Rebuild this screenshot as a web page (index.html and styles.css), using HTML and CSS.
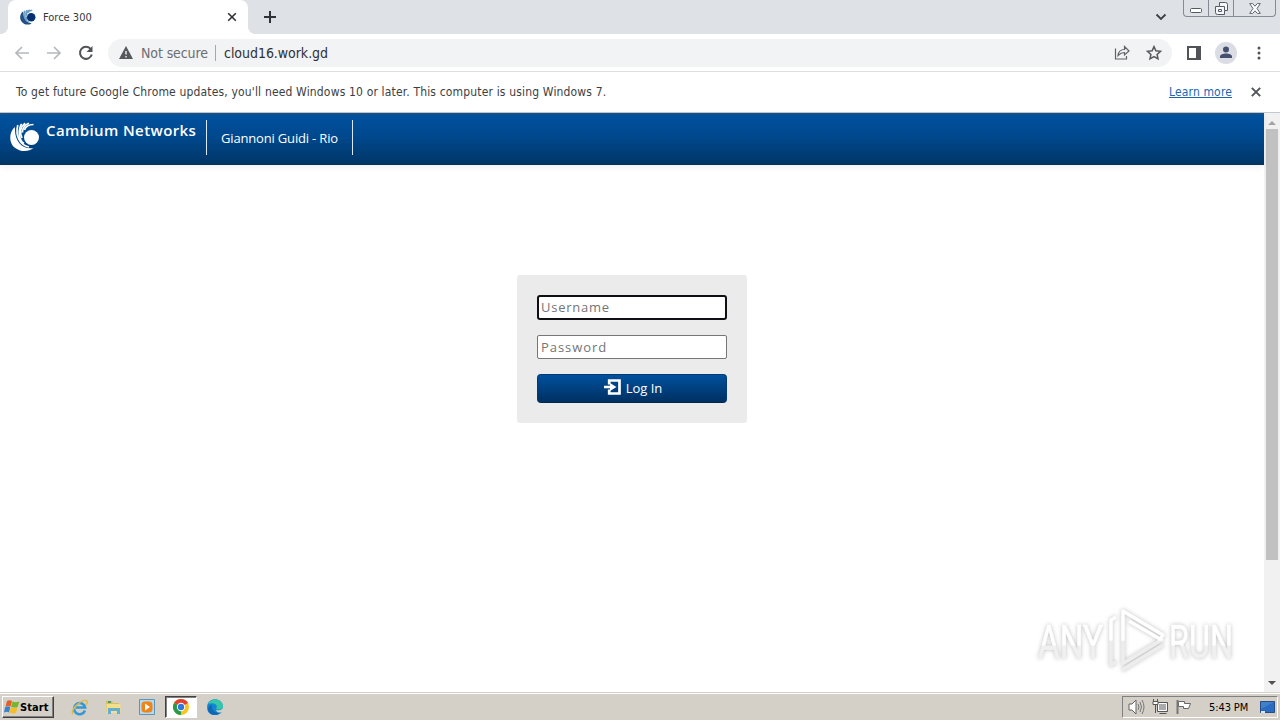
FILE: index.html
```html
<!DOCTYPE html>
<html lang="en">
<head>
<meta charset="utf-8">
<title>Force 300</title>
<link rel="stylesheet" href="styles.css">
</head>
<body>
<header class="tabs">
  <div class="tab">
    <svg class="favicon" width="16" height="16" viewBox="0 0 30 30"><path d="M6 4C-2 10-2 23 8 28q7 3 14-1Q6 25 6 4z" fill="#215184"/><path d="M9 3Q4 18 17 25M13 2Q8 12 14 20M18 1.500Q11 5 12 13M23 2Q16 3 14 8" fill="none" stroke="#6c9bc2" stroke-width="2.400"/><circle cx="21" cy="15.500" r="8" fill="#062f70"/></svg>
    <span class="tab-title">Force 300</span>
    <svg class="tab-close" width="10" height="10" viewBox="0 0 10 10"><path d="M1.200 1.200l7.600 7.600M8.800 1.200L1.200 8.800" stroke="#303236" stroke-width="1.600"/></svg>
  </div>
  <svg class="new-tab" width="12" height="12" viewBox="0 0 12 12"><path d="M6 0v12M0 6h12" stroke="#303236" stroke-width="2"/></svg>
  <svg class="tab-menu" width="12" height="8" viewBox="0 0 12 8"><path d="M1.500 1.500L6 6l4.500-4.500" fill="none" stroke="#3c4043" stroke-width="1.800"/></svg>
  <div class="window-controls">
    <span><svg width="12" height="5"><rect x=".5" y=".5" width="11" height="4" rx="1" fill="#fff" stroke="#555b66"/></svg></span>
    <span><svg width="13" height="13" viewBox="0 0 13 13"><path d="M4.500.5h6q2 0 2 2v6h-3v4h-7q-2 0-2-2v-6h4z" fill="#f5f6f8" stroke="#555b66"/><path d="M4.500 4.500h5v4M3.500 7.500h3v2h-3z" fill="none" stroke="#555b66"/></svg></span>
    <span class="wide"><svg width="12" height="11" viewBox="0 0 12 11"><path d="M.7.6h3L6 3.200 8.300.6h3L8 5.500l3.300 4.900h-3L6 7.800l-2.300 2.600h-3L4 5.500z" fill="#fff" stroke="#62666e"/></svg></span>
  </div>
</header>
<nav class="toolbar">
  <svg class="nav-icon" width="16" height="16" viewBox="0 0 16 16"><path d="M15 8H2M8 2L2 8l6 6" fill="none" stroke="#b6b8bb" stroke-width="1.700"/></svg>
  <svg class="nav-icon" width="16" height="16" viewBox="0 0 16 16"><path d="M1 8h13M8 2l6 6-6 6" fill="none" stroke="#b6b8bb" stroke-width="1.700"/></svg>
  <svg class="nav-icon" width="16" height="16" viewBox="0 0 16 16"><path d="M12.800 4.200A6 6 0 1 0 13.800 9.500" fill="none" stroke="#505357" stroke-width="2"/><path d="M14.500 1v6h-6z" fill="#505357"/></svg>
  <div class="address">
    <svg class="warning" width="14" height="13" viewBox="0 0 14 13"><path d="M7 0l7 13H0z" fill="#55585c"/><path d="M7 5v3.500M7 10v1.500" stroke="#f1f3f4" stroke-width="1.400"/></svg>
    <span class="security">Not secure</span><i class="address-line"></i><span class="url">cloud16.work.gd</span>
    <svg class="share" width="16" height="15" viewBox="0 0 16 15"><path d="M1.500 3.500v10.500h11v-3" fill="none" stroke="#606368" stroke-width="1.200"/><path d="M4 10.500c.5-4 3-6 6.500-6V1.500L15 6l-4.500 4V7.500C7.500 7.500 6 8.500 4 10.500z" fill="none" stroke="#606368" stroke-width="1.200"/></svg>
    <svg class="star" width="16" height="16" viewBox="0 0 16 16"><path d="M8 1.600l1.900 4.200 4.600.5-3.400 3.100.9 4.500L8 11.600l-4 2.300.9-4.500-3.400-3.100 4.600-.5z" fill="none" stroke="#55595e" stroke-width="1.500"/></svg>
  </div>
  <svg class="side-panel" width="14" height="14" viewBox="0 0 14 14"><path d="M1 1h12v12H1z" fill="#fff" stroke="#505357" stroke-width="2"/><path d="M9 0h5v14H9z" fill="#505357"/></svg>
  <svg class="profile" width="22" height="22" viewBox="0 0 22 22"><circle cx="11" cy="11" r="11" fill="#dadde3"/><circle cx="11" cy="7.500" r="3" fill="#44506d"/><path d="M5 16v-1.500c0-4 12-4 12 0V16z" fill="#44506d"/></svg>
  <svg class="kebab" width="4" height="14" viewBox="0 0 4 14"><circle cx="2" cy="2" r="1.500"/><circle cx="2" cy="7" r="1.500"/><circle cx="2" cy="12" r="1.500"/></svg>
</nav>
<aside class="notice">
  <span class="notice-text">To get future Google Chrome updates, you'll need Windows 10 or later. This computer is using Windows 7.</span>
  <a class="learn">Learn more</a>
  <svg width="10" height="10" viewBox="0 0 10 10"><path d="M.8.8l8.400 8.400M9.200.8L.8 9.200" stroke="#505357" stroke-width="1.900"/></svg>
</aside>
<div class="viewport">
  <main class="page">
    <div class="brand-bar">
      <svg class="logo" width="30" height="30" viewBox="0 0 30 30"><path d="M5 5C-1.500 10-1.500 22 6 26.500c5 3.500 13 3.500 17.500-.5C13 28 4 20 5 5z" fill="#fff"/><path d="M7.800 3C5 14 10 23 19 25M11.500 1.800C7.500 9 9 18 14 21.500M15 1.200C10.500 5 9.800 11 12 16M19 1.200C14 3 12.500 6.500 12.500 10.500M23.500 2.500C18 2.500 15.500 5 14.500 8" fill="none" stroke="#fff" stroke-width="1.700"/><circle cx="21.500" cy="15.500" r="7.500" fill="#fff"/></svg>
      <span class="brand">Cambium Networks</span>
      <span class="device">Giannoni Guidi - Rio</span>
    </div>
    <form class="login">
      <input class="field focused" placeholder="Username">
      <input class="field" type="password" placeholder="Password">
      <button class="submit" type="button">
        <svg width="17" height="16" viewBox="0 0 17 16"><path d="M5.200 5.500V1.500h10.300v13H5.200v-4" fill="none" stroke="#fff" stroke-width="2.700"/><path d="M0 6.800h6V4l6.500 4L6 12V9.200H0z" fill="#fff"/></svg>
        <span>Log In</span>
      </button>
    </form>
    <svg class="watermark" width="210" height="76" viewBox="0 0 210 76">
      <defs>
        <linearGradient id="fade" x1="0" y1="0" x2="0" y2="1"><stop offset=".56" stop-color="#fff"/><stop offset=".57" stop-color="#f0f0f0"/></linearGradient>
        <linearGradient id="line-fade" gradientUnits="userSpaceOnUse" x1="0" y1="0" x2="0" y2="76"><stop offset=".49" stop-color="#fff"/><stop offset=".5" stop-color="#ededed"/></linearGradient>
      </defs>
      <text class="mark-text" x="7" y="55" textLength="65" lengthAdjust="spacingAndGlyphs">ANY</text>
      <path class="mark-line" d="M85 14l-5 3v45l5-3M91 67l41-25M91 61l41-25M92 60V8l40 24-3 4-31-18"/>
      <text class="mark-text" x="138" y="55" textLength="64" lengthAdjust="spacingAndGlyphs">RUN</text>
    </svg>
  </main>
  <div class="scrollbar"><i class="arrow-up"></i><i class="thumb"></i><i class="arrow-down"></i></div>
</div>
<footer class="taskbar">
  <div class="start">
    <svg width="16" height="16" viewBox="0 0 16 16"><path d="M3 2q2-1.500 5 0L6.500 7.500Q4 6 1.500 7.500z" fill="#e65d25"/><path d="M8.500 2.500q3 1.500 7 0L13.500 8.200Q11 9.200 7 7.700z" fill="#79b52c"/><path d="M1.200 8Q4 6.500 6.200 8L5 13.500Q3 12 0 13.500z" fill="#3981ce"/><path d="M6.900 8.300q3 1.500 6.500.5L12 14q-3 1.200-6.500-.5z" fill="#f6be22"/></svg>
    <span>Start</span>
  </div>
  <div class="apps">
    <span><svg width="17" height="17" viewBox="0 0 17 17"><path d="M14 11.500A5.600 5.600 0 1 1 14.200 8.500H5" fill="none" stroke="#3498d7" stroke-width="2.500"/><path d="M2 15C-2 11 12-1 16 2c1 1-.5 3-1 4" fill="none" stroke="#dfb845" stroke-width="1.400"/></svg></span>
    <span><svg width="16" height="16" viewBox="0 0 16 16"><path d="M1 2h6l1 2h6v9H1z" fill="#d8bd62"/><path d="M1.500 5h14v9h-14z" fill="#f3df8a"/><path d="M3 15V9h12v6h-3v-3H6v3z" fill="#62afd6"/><path d="M3 3h3" stroke="#4b9b65" stroke-width="2"/></svg></span>
    <span><svg width="16" height="16" viewBox="0 0 16 16"><path d="M.5.500h15v15H.5z" fill="#b6d9ed" stroke="#5796bd"/><rect x="2.500" y="2.500" width="11" height="11" rx="3.500" fill="#ef8219"/><path d="M6 4.500l5 3.500-5 3.500z" fill="#fff"/></svg></span>
    <span class="active"><svg width="16" height="16" viewBox="0 0 16 16"><circle cx="8" cy="8" r="8" fill="#f7c51b"/><path d="M8 8L1.070 4A8 8 0 0 1 14.930 4z" fill="#e34032"/><path d="M8 8v8A8 8 0 0 1 1.070 4z" fill="#27994a"/><circle cx="8" cy="8" r="4.200" fill="#fff"/><circle cx="8" cy="8" r="3.200" fill="#3277df"/></svg></span>
    <span><svg width="16" height="16" viewBox="0 0 16 16"><path d="M.2 7C1-2 15-2 16 7c0 4-3 5-7 4 1 3 4 3 6 2C9 19-1 16 .2 7z" fill="#1485d1"/><path d="M1 5C4-2 16-1 16 8c-1 3-5 3-7 2 3-4-2-7-8-5z" fill="#35c7a7"/><path d="M5 6c-1 5 3 8 8 8-5 4-12 1-12-4 0-2 2-4 4-4z" fill="#1266b2"/></svg></span>
  </div>
  <div class="tray">
    <svg width="17" height="16" viewBox="0 0 17 16"><path d="M1 5h3l4-4v14l-4-4H1z" fill="#fff" stroke="#626262"/><path d="M10 5q2 3 0 6M12 3q3 5 0 10M14 1q4 7 0 14" fill="none" stroke="#777"/></svg>
    <svg width="17" height="16" viewBox="0 0 17 16"><path d="M5.500 3.500h10v9h-10z" fill="#aaa" stroke="#555"/><path d="M6.500 4.500h8v7h-8z" fill="none" stroke="#fff"/><path d="M7.500 14.500h7M1 2.500h5v3H1zM3.500 5v9M1.500 0v2M5.500 0v2" fill="#fff" stroke="#555"/></svg>
    <svg width="17" height="16" viewBox="0 0 17 16"><path d="M2.500 2.500h6v2h6l-2 5h-5v-2h-5z" fill="#fff" stroke="#666"/><path d="M1.500 1v14" stroke="#777" stroke-width="2"/></svg>
    <time>5:43 PM</time>
    <svg class="desktop" width="15" height="13" viewBox="0 0 15 13"><path d="M.5.500h14v11H.5z" fill="#296bc0" stroke="#254d83"/><path d="M1 1h13L1 8z" fill="#4280ca"/><path d="M1 10h4v2H1z" fill="#dae5f0"/></svg>
  </div>
</footer>
</body>
</html>
```
FILE: styles.css
```css
* { box-sizing: border-box; }
body { margin: 0; width: 1280px; height: 720px; overflow: hidden; display: flex; flex-direction: column; background: #fff; font-family: "DejaVu Sans Condensed", "DejaVu Sans", sans-serif; }
svg { display: block; flex: none; }
span, time, a { white-space: nowrap; }
.tabs { height: 34px; flex: none; display: flex; background: #dee1e6; padding-left: 8px; }
.tab { width: 240px; height: 34px; background: #fff; border-radius: 8px 8px 0 0; display: flex; align-items: center; padding: 0 11px 0 12px; position: relative; }
.tab::before, .tab::after { content: ""; position: absolute; bottom: 0; width: 8px; height: 8px; }
.tab::before { left: -8px; background: radial-gradient(circle at 0 0, transparent 8px, #fff 8px); }
.tab::after { right: -8px; background: radial-gradient(circle at 100% 0, transparent 8px, #fff 8px); }
.tab-title { font: 11px "DejaVu Sans Condensed", sans-serif; margin-left: 7px; color: #36383b; letter-spacing: 0; }
.tab-close { margin-left: auto; }
.new-tab { margin: 11px 0 0 16px; }
.tab-menu { margin: 13px 16px 0 auto; }
.window-controls { width: 93px; height: 17px; margin-right: 4px; display: flex; border: 1px solid #858b95; border-top: 0; border-radius: 0 0 4px 4px; }
.window-controls span { width: 25px; display: flex; align-items: center; justify-content: center; border-right: 1px solid #858b95; }
.window-controls span:first-child { padding-top: 4px; }
.window-controls .wide { width: 41px; border: 0; }
.toolbar { height: 38px; flex: none; display: flex; align-items: center; padding-left: 14px; border-bottom: 1px solid #dcdee1; }
.nav-icon { margin-right: 16px; }
.address { width: 1064px; height: 28px; border-radius: 14px; background: #f1f3f4; margin-left: -2px; padding-left: 11px; display: flex; align-items: center; font-size: 14px; }
.security { color: #6b6e72; margin-left: 8px; letter-spacing: -.1px; width: 67px; }
.address-line { height: 16px; width: 1px; background: #a5a8ab; margin: 0 8px 0 7px; }
.url { color: #303134; letter-spacing: -.04px; }
.share { margin-left: auto; }
.star { margin: 0 10px 0 16px; }
.side-panel { margin-left: 15px; }
.profile { margin-left: 14px; }
.kebab { margin-left: 20px; fill: #505357; }
.notice { height: 41px; flex: none; display: flex; align-items: center; padding: 0 19px 1px 16px; border-bottom: 1px solid #c2c9ce; font-size: 12px; }
.notice-text { color: #3c3e42; letter-spacing: .163px; }
.learn { color: #1967b3; text-decoration: underline; margin: 0 19px 0 auto; letter-spacing: .15px; }
.viewport { height: 579px; flex: none; display: flex; }
.page { width: 1264px; height: 579px; position: relative; display: flex; flex-direction: column; align-items: center; }
.brand-bar { width: 1264px; height: 52px; flex: none; display: flex; background: linear-gradient(#1b5283 0, #00509d 3px, #00498f 22px, #003667 51px, #002e56); box-shadow: 0 2px 7px rgba(0,0,0,.06); padding: 7px 0 10px 10px; color: #fff; }
.logo { margin-top: 2px; }
.brand { font: 600 15px/22px "Open Sans", sans-serif; margin-left: 6px; width: 160px; letter-spacing: .4px; position: relative; top: -1px; }
.device { font: 13px/36px "Open Sans", sans-serif; height: 35px; border: solid #d9e9f5; border-width: 0 1px; width: 147px; padding-left: 14px; letter-spacing: -.17px; }
.login { width: 230px; height: 148px; margin-top: 110px; background: #ebebeb; border-radius: 3px; padding: 20px; display: flex; flex-direction: column; }
.field { width: 190px; height: 24px; flex: none; border: 1px solid #767676; border-radius: 2px; background: #fff; padding: 0 3px; margin: 0 0 15px; outline: 0; font: 13px "Open Sans", sans-serif; letter-spacing: .95px; }
.field::placeholder { color: #757575; }
.focused { border: 2px solid #101014; height: 25px; padding: 0 2px 2px; border-radius: 3px; letter-spacing: .75px; }
.submit { width: 190px; height: 29px; border: 1px solid #003b74; border-bottom-color: #00284f; border-radius: 4px; background: linear-gradient(#00509d, #003062); color: #fff; font: 13px "Open Sans", sans-serif; display: flex; align-items: center; justify-content: center; gap: 5px; padding: 0 0 2px 2px; }
.submit svg { margin-top: -1px; }
.watermark { position: absolute; left: 1031px; top: 490px; overflow: visible; filter: drop-shadow(0 0 2px rgba(0,0,0,.26)); }
.mark-text { font: 400 46px Roboto, sans-serif; fill: url(#fade); stroke: url(#fade); stroke-width: .6px; }
.mark-line { fill: none; stroke: url(#line-fade); stroke-width: 3.5; stroke-linejoin: round; }
.scrollbar { width: 16px; background: #f1f1f1; display: flex; flex-direction: column; align-items: center; }
.thumb { width: 12px; height: 431px; margin-top: 4px; background: #c1c1c1; }
.arrow-up, .arrow-down { border: 4px solid transparent; height: 0; }
.arrow-up { border-top: 0; border-bottom-color: #a3a3a3; margin-top: 8px; }
.arrow-down { border-bottom: 0; border-top-color: #505050; margin: auto 0 7px; }
.taskbar { height: 28px; flex: none; background: #d4d0c8; border-top: 1px solid #d4d0c8; box-shadow: inset 0 1px #fff; display: flex; padding: 3px 2px 0; }
.start { width: 52px; height: 22px; border: 1px solid; border-color: #fff #404040 #404040 #fff; box-shadow: inset -1px -1px #808080; display: flex; align-items: center; padding-left: 1px; font: bold 11px "DejaVu Sans Condensed", sans-serif; letter-spacing: .1px; }
.apps { display: flex; margin-left: 9px; }
.apps span { width: 32px; height: 22px; margin-right: 2px; display: flex; align-items: center; justify-content: center; }
.apps .active { background: #fff; border: 1px solid; border-color: #404040 #fff #fff #404040; box-shadow: inset 1px 1px #808080; }
.tray { margin-left: auto; width: 156px; height: 22px; border: 1px solid; border-color: #808080 #fff #fff #808080; display: flex; align-items: center; padding-left: 5px; font-size: 11px; letter-spacing: -.1px; }
.tray svg { margin-right: 7px; }
.tray time { margin-left: 9px; width: 42px; }
.tray .desktop { margin: 0 0 0 9px; }
```
